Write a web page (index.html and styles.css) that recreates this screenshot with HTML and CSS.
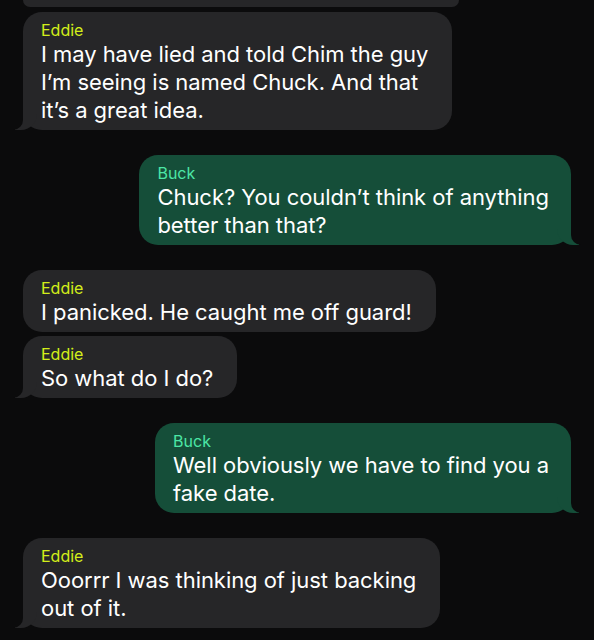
FILE: index.html
```html
<!DOCTYPE html>
<html lang="en">
<head>
    <meta charset="UTF-8">
    <meta name="viewport" content="width=device-width, initial-scale=1.0">
    <title>Messages</title>
    <link rel="stylesheet" href="styles.css">
</head>
<body>

<div class="chat">
    <!-- end of the previous message, scrolled off the top -->
    <div class="msg them cut">
        <div class="bubble"></div>
    </div>

    <div class="msg them same">
        <div class="bubble tail">
            <div class="name">Eddie</div>
            <div class="text">I may have lied and told Chim the guy<br>I’m seeing is named Chuck. And that<br>it’s a great idea.</div>
        </div>
    </div>

    <div class="msg me">
        <div class="bubble tail">
            <div class="name">Buck</div>
            <div class="text">Chuck? You couldn’t think of anything<br>better than that?</div>
        </div>
    </div>

    <div class="msg them">
        <div class="bubble">
            <div class="name">Eddie</div>
            <div class="text">I panicked. He caught me off guard!</div>
        </div>
    </div>

    <div class="msg them same">
        <div class="bubble tail">
            <div class="name">Eddie</div>
            <div class="text">So what do I do?</div>
        </div>
    </div>

    <div class="msg me">
        <div class="bubble tail">
            <div class="name">Buck</div>
            <div class="text">Well obviously we have to find you a<br>fake date.</div>
        </div>
    </div>

    <div class="msg them">
        <div class="bubble tail">
            <div class="name">Eddie</div>
            <div class="text">Ooorrr I was thinking of just backing<br>out of it.</div>
        </div>
    </div>
</div>

</body>
</html>
```

FILE: styles.css
```css
body {
    margin: 0;
    padding: 0;
    background-color: #0b0b0c;
    font-family: Inter, "Open Sans", sans-serif;
    color: #fff;
    overflow: hidden;
}
.chat {
    display: flex;
    flex-direction: column;
    padding: 0 23px;
}
.msg {
    display: flex;
    margin-top: 25px;
}
.msg.same {
    margin-top: 4px;
}
.msg.cut {
    margin-top: 0;
}
.msg.cut .bubble {
    width: 436px;
    height: 7px;
    padding: 0;
    border-radius: 0 0 14px 14px;
}
.msg.cut + .same {
    margin-top: 5px;
}
.them {
    justify-content: flex-start;
}
.me {
    justify-content: flex-end;
}
.bubble {
    position: relative;
    padding: 8px 24px 6px 18px;
    border-radius: 19px;
    background-color: #262628;
}
.me .bubble {
    background-color: #154e39;
    padding-right: 22px;
}
.name {
    font-size: 16px;
    line-height: 20px;
    color: #d3ee1a;
}
.me .name {
    color: #4ce6a6;
}
.text {
    font-size: 22px;
    line-height: 28px;
    letter-spacing: -0.05px;
    white-space: nowrap;
}

/* bubble tails */
.tail::before,
.tail::after {
    content: "";
    position: absolute;
    bottom: 0;
    height: 22px;
}
.them .tail::before {
    left: -8px;
    width: 22px;
    background-color: #262628;
    border-bottom-right-radius: 16px;
}
.them .tail::after {
    left: -12px;
    width: 12px;
    background-color: #0b0b0c;
    border-bottom-right-radius: 10px;
}
.me .tail::before {
    right: -8px;
    width: 22px;
    background-color: #154e39;
    border-bottom-left-radius: 16px;
}
.me .tail::after {
    right: -12px;
    width: 12px;
    background-color: #0b0b0c;
    border-bottom-left-radius: 10px;
}
```
